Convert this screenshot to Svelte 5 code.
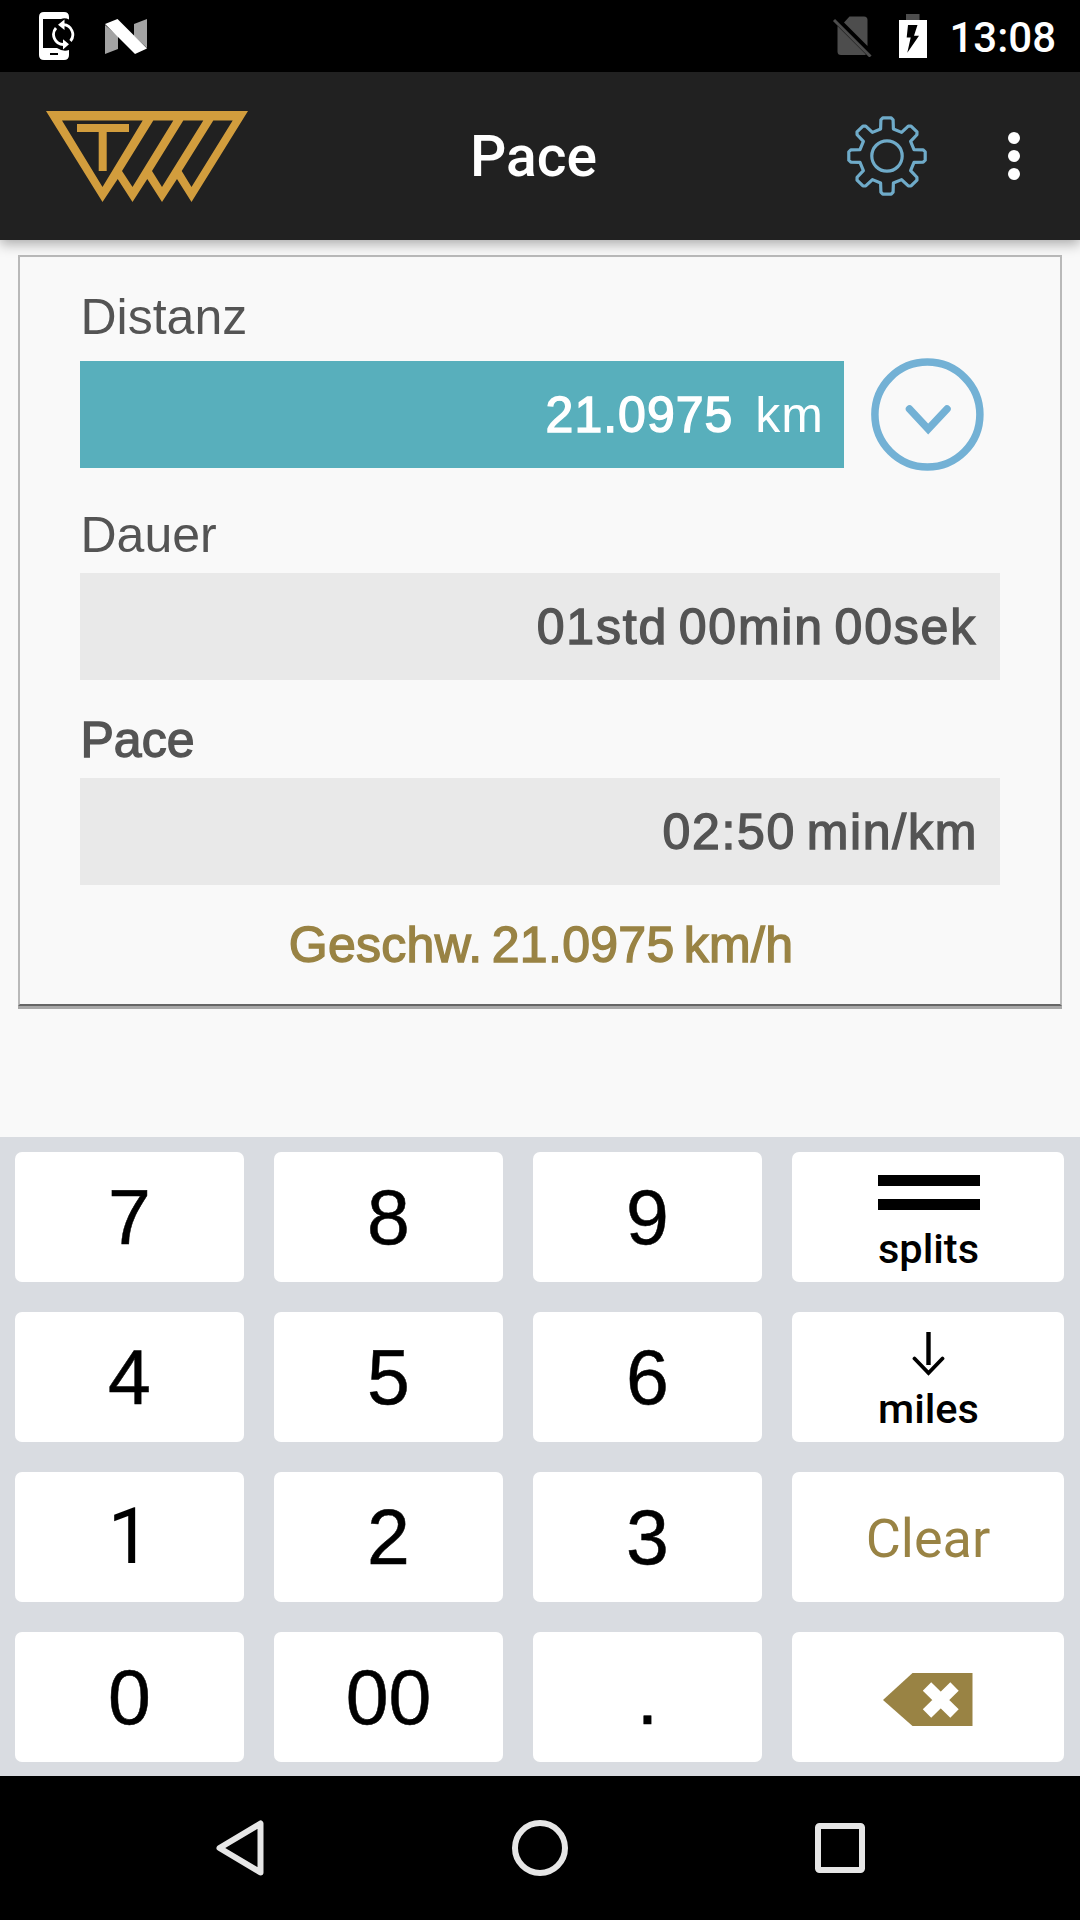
<script lang="ts">
	type Key = { label: string; kind?: 'splits' | 'miles' | 'clear' | 'delete' | 'one' };

	const keys: Key[] = [
		{ label: '7' },
		{ label: '8' },
		{ label: '9' },
		{ label: 'splits', kind: 'splits' },
		{ label: '4' },
		{ label: '5' },
		{ label: '6' },
		{ label: 'miles', kind: 'miles' },
		{ label: '1', kind: 'one' },
		{ label: '2' },
		{ label: '3' },
		{ label: 'Clear', kind: 'clear' },
		{ label: '0' },
		{ label: '00' },
		{ label: '.' },
		{ label: '', kind: 'delete' }
	];

	let distance = '21.0975';
	let duration = '01std 00min 00sek';
	let pace = '02:50 min/km';
	let speed = '21.0975 km/h';

	// one gear tooth, repeated every 45 degrees
	const tooth = [
		[-6.4, -27],
		[-6.1, -36.2],
		[-4.2, -38.2],
		[4.2, -38.2],
		[6.1, -36.2],
		[6.4, -27]
	];

	function gearPoints() {
		const points: string[] = [];
		for (let i = 0; i < 8; i++) {
			const a = (i * Math.PI) / 4;
			for (const [x, y] of tooth) {
				const px = x * Math.cos(a) - y * Math.sin(a);
				const py = x * Math.sin(a) + y * Math.cos(a);
				points.push(`${px.toFixed(2)},${py.toFixed(2)}`);
			}
		}
		return points.join(' ');
	}
</script>

<div class="screen">
	<div class="status-bar">
		<div class="status-left">
			<svg width="36" height="48" viewBox="0 0 36 48">
				<path fill="#fff" fill-rule="evenodd" d="M5 0H25Q30 0 30 5V7.5Q26 5.5 22 7H4V36H18Q24 40 30 38V43Q30 48 25 48H5Q0 48 0 43V5Q0 0 5 0ZM11 41V43H19V41Z" />
				<path fill="none" stroke="#fff" stroke-width="2.8" d="M17 16A10 10 0 0 0 24.5 32.5M24.5 12.7A10 10 0 0 1 31.5 29" />
				<path fill="#fff" d="M25.5 7.5V18L19 12.7ZM24 27.2V37.5L30 32.3Z" />
			</svg>
			<svg width="42" height="35" viewBox="0 0 42 35">
				<path fill="#a3a3a3" d="M0 6L13 17V30L0 35ZM42 0V29L29 17V5Z" />
				<path fill="#fff" d="M0 5L12.5 0L42 29.5L30 35Z" />
			</svg>
		</div>
		<div class="status-right">
			<svg width="40" height="42" viewBox="0 0 40 42">
				<path fill="#4d4d4d" d="M17.5 1.5H32Q35.5 1.5 35.5 5V31L12 7.5ZM5.5 11L34 39.5Q33 40 31.5 40H9Q5.5 40 5.5 36.5Z" />
				<path stroke="#4d4d4d" stroke-width="3" d="M2 5L38.5 41.5" />
			</svg>
			<svg width="28" height="44" viewBox="0 0 28 44">
				<rect x="7" width="13.5" height="6" fill="#4d4d4d" />
				<path fill="#fff" fill-rule="evenodd" d="M0 6H28V44H0ZM9 11L7.7 23.5H11.7L8.3 38.7L20 21.7H15L18.5 11Z" />
			</svg>
			<span class="clock">13:08</span>
		</div>
	</div>

	<header class="app-bar">
		<svg width="202" height="91" viewBox="46 111 202 91" fill="#d29d3d">
			<path
				fill-rule="evenodd"
				d="M46 111H248L191.5 202L177 179L162 202L147.3 179L132.5 202L117.7 179L102.5 202ZM62 120.5L102.5 187L142.7 120.5ZM153.3 120.5H173.3L132.5 187L122 171ZM183.3 120.5H203.3L162 187L152 171ZM213.3 120.5H232.7L191.5 187L181.7 171Z"
			/>
			<rect x="77" y="124" width="52" height="8" />
			<rect x="98.7" y="130" width="8" height="41" />
		</svg>
		<h1>Pace</h1>
		<div class="actions">
			<svg width="84" height="84" viewBox="-42 -42 84 84" fill="none" stroke="#6fabc9" stroke-width="3.2" stroke-linejoin="round">
				<polygon points={gearPoints()} />
				<circle r="15.2" />
			</svg>
			<svg width="12" height="48" viewBox="0 0 12 48" fill="#fff">
				<circle cx="6" cy="6" r="6" />
				<circle cx="6" cy="24" r="6" />
				<circle cx="6" cy="42" r="6" />
			</svg>
		</div>
	</header>

	<main>
		<section class="card">
			<div class="label">Distanz</div>
			<div class="distance-row">
				<div class="field active">
					<span>{distance}</span>
					<span class="unit">km</span>
				</div>
				<svg width="114" height="114" viewBox="0 0 114 114" fill="none" stroke="#73b1d5">
					<circle cx="56.4" cy="56.6" r="52.5" stroke-width="7.5" />
					<path d="M38.5 51L57.2 71L76 51" stroke-width="7.5" stroke-linecap="round" />
				</svg>
			</div>
			<div class="label">Dauer</div>
			<div class="field duration">{duration}</div>
			<div class="label strong">Pace</div>
			<div class="field">{pace}</div>
			<div class="speed">Geschw. {speed}</div>
		</section>
	</main>

	<div class="keypad">
		{#each keys as key}
			<div class="key {key.kind ?? 'digit'}">
				{#if key.kind === 'splits'}
					<svg width="102" height="35" viewBox="0 0 102 35">
						<rect width="102" height="11" />
						<rect y="24" width="102" height="11" />
					</svg>
				{:else if key.kind === 'miles'}
					<svg width="34" height="44" viewBox="0 0 34 44" fill="none" stroke="#000">
						<path d="M16.5 0V33" stroke-width="4.4" />
						<path d="M2.5 26.5L16.5 41L30.5 26.5" stroke-width="3.8" stroke-linecap="round" />
					</svg>
				{:else if key.kind === 'delete'}
					<svg width="90" height="53" viewBox="0 0 90 53">
						<path fill="#998344" d="M0 27L29.5 0H89.5V53H29.5Z" />
						<path stroke="#fff" stroke-width="12" d="M44 13.5L71.5 40.5M71.5 13.5L44 40.5" />
					</svg>
				{/if}
				{#if key.label}
					<span>{key.label}</span>
				{/if}
			</div>
		{/each}
	</div>

	<nav>
		<svg width="50" height="58" viewBox="0 0 50 58">
			<path d="M45.5 4.5V53.5L4.5 29Z" />
		</svg>
		<svg width="58" height="58" viewBox="0 0 58 58">
			<circle cx="29" cy="29" r="25" />
		</svg>
		<svg width="50" height="50" viewBox="0 0 50 50">
			<rect x="3" y="3" width="44" height="44" rx="1.5" />
		</svg>
	</nav>
</div>

<style>
	:global(body) {
		background: #f9f9f9;
	}

	.screen {
		display: flex;
		flex-direction: column;
		width: 1080px;
		height: 1920px;
		overflow: hidden;
		background: #f9f9f9;
		font-family: 'Liberation Sans', Arial, sans-serif;
	}

	svg {
		display: block;
		flex-shrink: 0;
	}

	.status-bar {
		display: flex;
		justify-content: space-between;
		height: 72px;
		flex-shrink: 0;
		box-sizing: border-box;
		padding: 0 24px 0 39px;
		background: #000;
	}

	.status-left,
	.status-right {
		display: flex;
		align-items: center;
	}

	.status-left {
		gap: 30px;
	}

	.status-right {
		gap: 27px;
	}

	.clock {
		margin-left: -5px;
		padding-top: 3px;
		color: #fff;
		font-family: Roboto, sans-serif;
		font-size: 42px;
		font-weight: 500;
		line-height: 50px;
	}

	.app-bar {
		display: grid;
		grid-template-columns: 1fr auto 1fr;
		align-items: center;
		height: 168px;
		flex-shrink: 0;
		box-sizing: border-box;
		padding: 0 60px 0 46px;
		background: #212121;
		box-shadow: 0 4px 12px rgba(0, 0, 0, 0.32);
		z-index: 1;
	}

	h1 {
		margin: 2px 0 0 1px;
		color: #fff;
		font-family: Roboto, sans-serif;
		font-size: 57px;
		font-weight: 500;
		line-height: 68px;
	}

	.actions {
		display: flex;
		align-items: center;
		justify-content: flex-end;
		gap: 79px;
	}

	main {
		height: 897px;
		flex-shrink: 0;
		box-sizing: border-box;
		padding: 15px 18px;
	}

	.card {
		display: flex;
		flex-direction: column;
		height: 751px;
		box-sizing: border-box;
		padding: 30px 60px 0;
		border: 2px solid #b9b9b9;
		border-bottom-color: #666;
		box-shadow: 0 3px 0 #a8a8a8;
		color: #545454;
		font-size: 50px;
	}

	.label {
		height: 60px;
		padding-left: 0.5px;
		line-height: 60px;
	}

	.strong,
	.field,
	.speed {
		-webkit-text-stroke: 1.4px currentColor;
	}

	.distance-row {
		display: flex;
		align-items: center;
		gap: 27px;
		height: 107px;
		margin: 14px 0 37px;
	}

	.field {
		display: flex;
		align-items: center;
		justify-content: flex-end;
		height: 107px;
		box-sizing: border-box;
		margin-top: 8px;
		padding-right: 22px;
		background: #e9e9e9;
		letter-spacing: 1.7px;
		word-spacing: -5px;
	}

	.duration {
		margin-bottom: 30px;
		padding-right: 23px;
		letter-spacing: 1.8px;
	}

	.active {
		width: 764px;
		margin: 0;
		padding-right: 20px;
		gap: 22px;
		background: #58afbc;
		color: #fff;
		letter-spacing: 1px;
	}

	.unit {
		-webkit-text-stroke: 0;
	}

	.speed {
		margin-top: 30px;
		padding-left: 2px;
		color: #998344;
		line-height: 60px;
		letter-spacing: 0.3px;
		word-spacing: -5px;
		text-align: center;
	}

	.keypad {
		display: grid;
		grid-template-columns: 229px 229px 229px 272px;
		grid-auto-rows: 130px;
		gap: 30px;
		height: 639px;
		flex-shrink: 0;
		box-sizing: border-box;
		padding: 15px;
		background: #d9dce1;
	}

	.key {
		display: flex;
		flex-direction: column;
		align-items: center;
		box-sizing: border-box;
		border-radius: 7px;
		background: #fff;
		color: #000;
		font-family: Roboto, sans-serif;
	}

	.digit,
	.one {
		justify-content: center;
		font-size: 77px;
	}

	.digit {
		font-family: 'Liberation Sans', Arial, sans-serif;
		-webkit-text-stroke: 0.5px #000;
	}

	.splits,
	.miles {
		font-size: 41.5px;
		font-weight: 500;
		line-height: 50px;
	}

	.splits {
		padding: 23px 0 0 1px;
		gap: 14px;
	}

	.miles {
		padding: 20px 0 0 1px;
		gap: 8px;
	}

	.clear {
		justify-content: center;
		padding-top: 2px;
		color: #998344;
		font-size: 54px;
	}

	.delete {
		justify-content: center;
		padding-top: 4px;
	}

	nav {
		display: flex;
		align-items: center;
		justify-content: space-between;
		height: 144px;
		box-sizing: border-box;
		padding: 0 215px;
		background: #000;
	}

	nav svg {
		fill: none;
		stroke: #e6e6e6;
		stroke-width: 6;
		stroke-linejoin: round;
	}
</style>
